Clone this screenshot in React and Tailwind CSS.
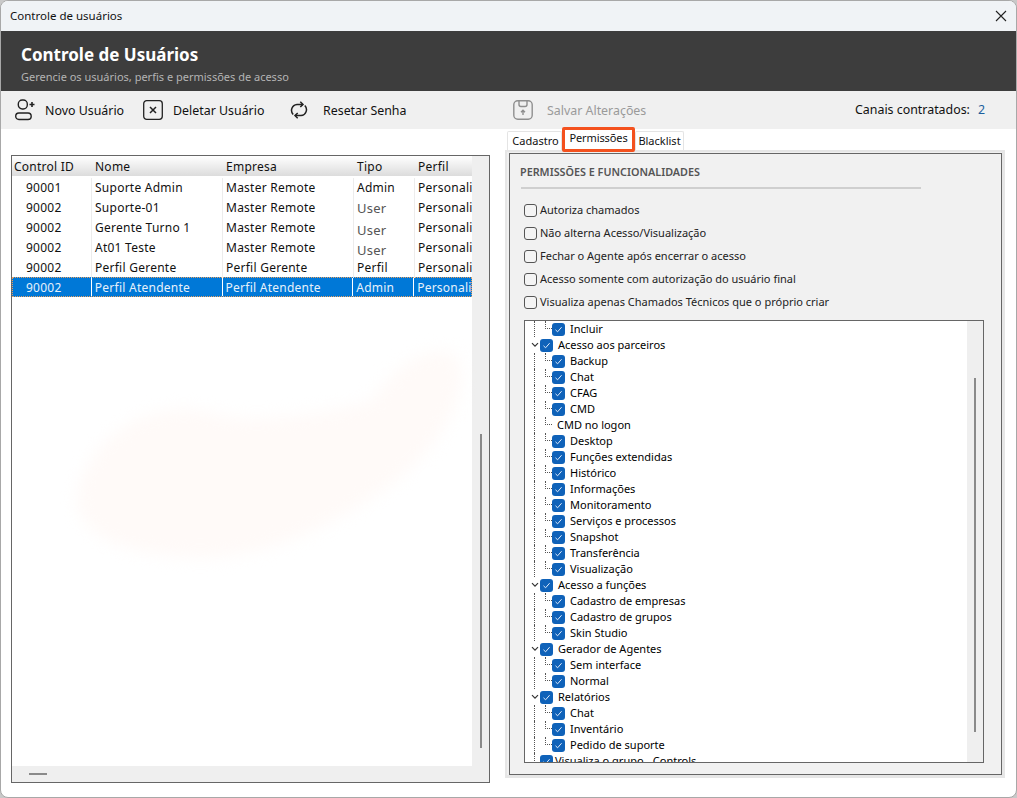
import React from "react";

const font = { fontFamily: '"Noto Sans", "Open Sans", sans-serif' };

const users = [
  ["90001", "Suporte Admin", "Master Remote", "Admin"],
  ["90002", "Suporte-01", "Master Remote", "User"],
  ["90002", "Gerente Turno 1", "Master Remote", "User", true],
  ["90002", "At01 Teste", "Master Remote", "User", true],
  ["90002", "Perfil Gerente", "Perfil Gerente", "Perfil"],
  ["90002", "Perfil Atendente", "Perfil Atendente", "Admin"],
];

const options = [
  "Autoriza chamados",
  "Não alterna Acesso/Visualização",
  "Fechar o Agente após encerrar o acesso",
  "Acesso somente com autorização do usuário final",
  "Visualiza apenas Chamados Técnicos que o próprio criar",
];

const tree = [
  { label: "Incluir", child: true },
  { label: "Acesso aos parceiros" },
  { label: "Backup", child: true },
  { label: "Chat", child: true },
  { label: "CFAG", child: true },
  { label: "CMD", child: true },
  { label: "CMD no logon", child: true, plain: true },
  { label: "Desktop", child: true },
  { label: "Funções extendidas", child: true },
  { label: "Histórico", child: true },
  { label: "Informações", child: true },
  { label: "Monitoramento", child: true },
  { label: "Serviços e processos", child: true },
  { label: "Snapshot", child: true },
  { label: "Transferência", child: true },
  { label: "Visualização", child: true },
  { label: "Acesso a funções" },
  { label: "Cadastro de empresas", child: true },
  { label: "Cadastro de grupos", child: true },
  { label: "Skin Studio", child: true },
  { label: "Gerador de Agentes" },
  { label: "Sem interface", child: true },
  { label: "Normal", child: true },
  { label: "Relatórios" },
  { label: "Chat", child: true },
  { label: "Inventário", child: true },
  { label: "Pedido de suporte", child: true },
  { label: "Visualiza o grupo - Controls", leaf: true },
];

function Check() {
  return (
    <span className="flex h-[13px] w-[13px] shrink-0 items-center justify-center rounded-[3px] bg-[#0f62b9]">
      <svg width="9" height="9" viewBox="0 0 9 9" fill="none" stroke="#dfeafa" strokeWidth="1">
        <path d="M1.5 4.8 3.6 6.8 7.6 2.2" />
      </svg>
    </span>
  );
}

function TreeRow({ item }) {
  if (item.child) {
    return (
      <div className="flex h-4 items-center">
        <span className="ml-[9px] h-full w-[11px] border-l border-dotted border-[#555]"></span>
        <span className="h-full w-[7px] self-start">
          <span className="block h-2 border-b border-l border-dotted border-[#555]"></span>
        </span>
        {item.plain ? (
          <span className="pl-[5px] text-[11px] leading-4 text-black">{item.label}</span>
        ) : (
          <>
            <Check />
            <span className="ml-[5px] text-[11px] leading-4 text-black">{item.label}</span>
          </>
        )}
      </div>
    );
  }
  return (
    <div className="flex h-4 items-center">
      <span className="flex w-[15px] shrink-0 justify-start pl-[6px]">
        {item.leaf ? (
          <span className="ml-[3px] h-4 w-[6px] border-l border-dotted border-[#555]"></span>
        ) : (
          <svg width="8" height="6" viewBox="0 0 8 6" fill="none" stroke="#333" strokeWidth="1.2">
            <path d="M1 1.2 4 4.2 7 1.2" />
          </svg>
        )}
      </span>
      <Check />
      <span className={`${item.leaf ? "ml-[2px]" : "ml-[5px]"} text-[11px] leading-4 text-black`}>{item.label}</span>
    </div>
  );
}

function UserRow({ row, selected }) {
  const cell = selected ? "border-white" : "border-[#ececec]";
  const user = !selected && row[3] === "User";
  return (
    <div
      className={`flex h-5 items-center text-[12px] tracking-[0.25px] ${
        selected ? "mt-[-1px] border border-dotted border-[#e8a060] bg-[#0078d7] text-[#e6f1fb]" : "text-[#111]"
      }`}
    >
      <div className={`h-full border-r leading-5 ${cell} ${selected ? "w-[79px] pl-[13px]" : "w-[80px] pl-[14px]"}`}>{row[0]}</div>
      <div className={`h-full w-[131px] border-r pl-[3px] leading-5 ${cell}`}>{row[1]}</div>
      <div className={`h-full w-[131px] border-r pl-[3px] leading-5 ${cell}`}>{row[2]}</div>
      <div
        className={`h-full w-[61px] border-r pl-[3px] leading-5 ${cell} ${user ? "text-[13px] text-[#555]" : ""} ${
          row[4] ? "pt-[2px]" : ""
        }`}
      >
        {row[3]}
      </div>
      <div className="h-full w-[57px] overflow-hidden whitespace-nowrap pl-[3px] leading-5">Personalizado</div>
    </div>
  );
}

export default function App() {
  return (
    <div style={font} className="relative flex h-[798px] w-[1017px] flex-col overflow-hidden bg-[#c9c9c9]">
      <div className="flex h-full flex-col overflow-hidden rounded-[8px] border border-[#a8a8a8] bg-white">
        {/* title bar */}
        <div className="flex h-[30px] shrink-0 items-center justify-between bg-[#f0f3f6] pl-[9px] pr-[9px]">
          <span className="text-[11.5px] text-[#111]">Controle de usuários</span>
          <svg width="12" height="12" viewBox="0 0 12 12" fill="none" stroke="#222" strokeWidth="1.1">
            <path d="M1 1 11 11M11 1 1 11" />
          </svg>
        </div>

        {/* header */}
        <div className="flex h-[60px] shrink-0 flex-col bg-[#3d3d3d] pl-[20px] pt-[12px]">
          <span className="text-[17px] font-bold leading-[24px] text-white">Controle de Usuários</span>
          <span className="mt-[3px] text-[11px] leading-[14px] text-[#b4b4b4]">
            Gerencie os usuários, perfis e permissões de acesso
          </span>
        </div>

        {/* toolbar */}
        <div className="flex h-[38px] shrink-0 items-center bg-[#f0f0f0] text-[12.4px] text-[#111]">
          <svg className="ml-[14px]" width="22" height="22" viewBox="0 0 22 22" fill="none" stroke="#222" strokeWidth="1.4">
            <rect x="3.3" y="1" width="9" height="9" rx="4" />
            <rect x="0.7" y="14" width="15.5" height="6.5" rx="3.2" />
            <path d="M14.5 5.5h5M17 3v5" strokeWidth="1.6" />
          </svg>
          <span className="ml-[8px] mt-[2px] w-[90px]">Novo Usuário</span>
          <svg className="ml-[8px]" width="20" height="20" viewBox="0 0 20 20" fill="none" stroke="#222" strokeWidth="1.3">
            <rect x="0.7" y="0.7" width="18.6" height="18.6" rx="3" />
            <path d="M7 7l6 6M13 7l-6 6" strokeWidth="1.5" />
          </svg>
          <span className="ml-[10px] mt-[2px] w-[117px]">Deletar Usuário</span>
          <svg width="18" height="18" viewBox="0 0 18 18" fill="none" stroke="#222" strokeWidth="1.5">
            <path d="M3.2 13.5A6 6 0 0 1 7 3.4h6" />
            <path d="M10.3 0.8 13 3.4l-2.7 2.6" />
            <path d="M14.8 4.5A6 6 0 0 1 11 14.6H5" />
            <path d="M7.7 12 5 14.6l2.7 2.6" />
          </svg>
          <span className="ml-[15px] mt-[2px] w-[190px]">Resetar Senha</span>
          <svg width="20" height="20" viewBox="0 0 20 20" fill="none" stroke="#8f8f8f" strokeWidth="1.4">
            <rect x="0.8" y="0.8" width="18.4" height="18.4" rx="4" />
            <path d="M6 1v3.5a2 2 0 0 0 2 2h4a2 2 0 0 0 2-2V1" />
            <path d="M10 15v-4.5M8 12.2l2-2 2 2" />
          </svg>
          <span className="ml-[14px] mt-[2px] w-[308px] text-[#9a9a9a]">Salvar Alterações</span>
          <span>Canais contratados:</span>
          <span className="ml-[8px] text-[#1c5f9e]">2</span>
        </div>

        {/* body */}
        <div className="flex min-h-0 flex-1">
          <div className="w-[504px] shrink-0 pl-[10px] pt-[26px]">
            <div className="relative flex h-[628px] w-[479px] flex-col border border-[#666] bg-[#efefef]">
              <div className="flex min-h-0 flex-1">
                <div className="w-[460px] bg-white">
                  <div className="mb-[2px] flex h-[20px] items-center bg-gradient-to-b from-[#ffffff] to-[#dcdcdc] pt-[1px] text-[12px] tracking-[0.25px] text-[#111]">
                    <span className="w-[80px] pl-[2px]">Control ID</span>
                    <span className="w-[131px] pl-[3px]">Nome</span>
                    <span className="w-[131px] pl-[3px]">Empresa</span>
                    <span className="w-[61px] pl-[3px]">Tipo</span>
                    <span className="pl-[3px]">Perfil</span>
                  </div>
                  {users.map((row, i) => (
                    <UserRow key={i} row={row} selected={i === 5} />
                  ))}
                </div>
                <div className="flex w-[17px] justify-center pt-[278px]">
                  <div className="h-[314px] w-[2px] bg-[#8a8a8a]"></div>
                </div>
              </div>
              <div className="flex h-[16px] shrink-0 items-center pl-[17px]">
                <div className="h-[2px] w-[18px] bg-[#8a8a8a]"></div>
              </div>
              {/* faint watermark behind the empty list */}
              <svg className="pointer-events-none absolute left-[40px] top-[160px] blur-[8px]" width="420" height="280" viewBox="0 0 420 280" fill="#fffaf8">
                <path d="M25 180C35 125 90 85 150 95 200 110 260 100 320 85 345 45 385 25 405 40 420 70 395 130 330 175 270 215 200 250 120 240 70 235 25 220 25 180Z" />
              </svg>
            </div>
          </div>

          <div className="w-[500px] shrink-0">
            {/* tabs */}
            <div className="flex h-[21px] items-end pl-[2px] text-[11px] text-[#111]">
              <div className="flex h-[19px] w-[55px] items-center justify-center rounded-t-[2px] border border-b-0 border-[#e4e4e4] bg-white pl-[2px]">
                Cadastro
              </div>
              <div className="relative z-10 mb-[-2px] flex h-[25px] w-[73px] items-center justify-center rounded-[2px] border-[3px] border-[#f4511e] bg-white pb-[2px] tracking-[-0.1px]">
                Permissões
              </div>
              <div className="flex h-[19px] w-[49px] items-center justify-center rounded-t-[2px] border border-b-0 border-[#e4e4e4] bg-white">
                Blacklist
              </div>
            </div>
            {/* tab panel */}
            <div className="h-[628px] border-2 border-[#e6e6e6] border-b-[3px] border-r-[3px] bg-[#f0f0f0] pt-[1px] pl-[2px]">
              <div className="flex h-[622px] w-[493px] flex-col border border-[#666] bg-[#f1f1f1] pl-[10px]">
                <span className="mt-[10px] text-[10.8px] font-semibold leading-4 text-[#555]">PERMISSÕES E FUNCIONALIDADES</span>
                <div className="ml-[1px] mt-[7px] h-[2px] w-[400px] bg-[#cfcfcf]"></div>
                <div className="ml-[4px] mt-[10px] flex flex-col">
                  {options.map((label) => (
                    <div key={label} className="flex h-[23px] items-center gap-[3px] text-[11px] text-[#222]">
                      <span className="h-[13px] w-[13px] shrink-0 rounded-[3px] border border-[#555] bg-[#f4f4f4]"></span>
                      {label}
                    </div>
                  ))}
                </div>
                {/* permission tree */}
                <div className="ml-[4px] mt-[6px] flex h-[443px] w-[460px] overflow-hidden border border-[#666] bg-[#efefef]">
                  <div className="h-full w-[442px] overflow-hidden bg-white">
                    {tree.map((item, i) => (
                      <TreeRow key={i} item={item} />
                    ))}
                  </div>
                  <div className="flex flex-1 justify-center pt-[57px]">
                    <div className="h-[354px] w-[2px] bg-[#8a8a8a]"></div>
                  </div>
                </div>
              </div>
            </div>
          </div>
        </div>
      </div>
    </div>
  );
}
